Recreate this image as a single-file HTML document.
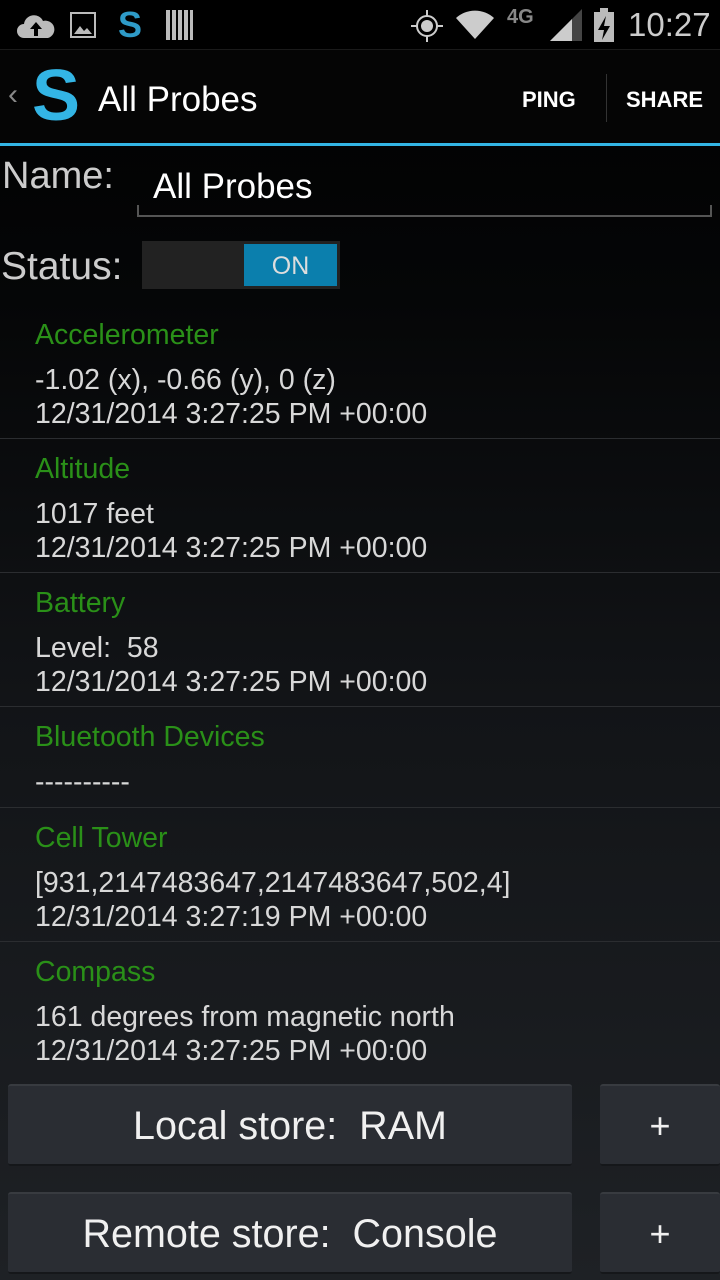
<!DOCTYPE html>
<html><head><meta charset="utf-8"><style>
*{margin:0;padding:0;box-sizing:border-box}
body{width:720px;height:1280px;overflow:hidden;font-family:"Liberation Sans",sans-serif;background:linear-gradient(#000 0px,#050607 300px,#121417 700px,#1e2125 1280px);color:#ddd;position:relative}
.abs{position:absolute}
.sb{top:0;left:0;width:720px;height:50px;background:#000;border-bottom:1px solid #1a1a1a}
.ab{top:50px;left:0;width:720px;height:93px;background:#050505}
.line{top:143px;left:0;width:720px;height:3px;background:#33b5e5}
.item{position:absolute;left:0;width:720px;border-bottom:1px solid #2b2d30}
.t{position:absolute;left:35px;color:#2a9018;font-size:28.5px;line-height:32px}
.v{position:absolute;left:35px;color:#d8d8d8;font-size:28.5px;line-height:32px}
.btn{position:absolute;background:#2a2d33;border-top:2px solid #383b40;border-bottom:2px solid #15171a;border-radius:3px;color:#f0f0f0;text-align:center}
</style></head><body>
<div class="abs sb">
<svg class="abs" style="left:16px;top:12px" width="40" height="28" viewBox="0 0 40 28"><path d="M8 26a7 7 0 0 1 0-14a10 10 0 0 1 19-3a8 8 0 0 1 5 17z" fill="#bbb"/><path d="M20 10l-6 7h4v7h4v-7h4z" fill="#000"/></svg>
<svg class="abs" style="left:70px;top:12px" width="26" height="26"><rect x="1" y="1" width="24" height="24" fill="none" stroke="#bbb" stroke-width="2"/><path d="M4 22l6-8 4 5 3-3 5 6z" fill="#bbb"/></svg>
<div class="abs" style="left:118px;top:4px;font-size:36px;font-weight:bold;color:#2e9bc8">S</div>
<svg class="abs" style="left:166px;top:10px" width="28" height="30"><g fill="#bbb"><rect x="0" y="0" width="4" height="30"/><rect x="6" y="0" width="4" height="30"/><rect x="12" y="0" width="4" height="30"/><rect x="18" y="0" width="4" height="30"/><rect x="24" y="0" width="3" height="30"/></g></svg>
<svg class="abs" style="left:410px;top:9px" width="34" height="34"><circle cx="17" cy="17" r="10" fill="none" stroke="#ccc" stroke-width="2"/><circle cx="17" cy="17" r="6" fill="#ccc"/><path d="M17 1v6M17 27v6M1 17h6M27 17h6" stroke="#ccc" stroke-width="2"/></svg>
<svg class="abs" style="left:455px;top:10px" width="40" height="30" viewBox="0 0 40 30"><path d="M20 29L1 8a28 28 0 0 1 38 0z" fill="#ccc"/></svg>
<div class="abs" style="left:507px;top:6px;font-size:20px;font-weight:bold;color:#888">4G</div>
<svg class="abs" style="left:548px;top:8px" width="36" height="34"><path d="M2 33L34 1V33z" fill="#444"/><path d="M2 33L24 11V33z" fill="#ccc"/></svg>
<svg class="abs" style="left:592px;top:8px" width="24" height="34"><rect x="8" y="0" width="8" height="4" fill="#bbb"/><rect x="2" y="4" width="20" height="30" fill="#bbb"/><path d="M14 8l-8 14h6l-2 10 8-14h-6z" fill="#000"/></svg>
<div class="abs" style="left:628px;top:6px;font-size:33px;color:#ccc">10:27</div>
</div>
<div class="abs ab">
<div class="abs" style="left:8px;top:28px;font-size:30px;color:#888">‹</div>
<div class="abs" style="left:32px;top:6px;font-size:72px;font-weight:bold;color:#33b5e5;line-height:80px">S</div>
<div class="abs" style="left:98px;top:30px;font-size:35px;color:#fff">All Probes</div>
<div class="abs" style="left:522px;top:37px;font-size:22px;font-weight:bold;color:#fff">PING</div>
<div class="abs" style="left:606px;top:24px;width:1px;height:48px;background:#333"></div>
<div class="abs" style="left:626px;top:37px;font-size:22px;font-weight:bold;color:#fff">SHARE</div>
</div>
<div class="abs line"></div>
<div class="abs" style="left:2px;top:155px;font-size:38px;color:#ccc">Name:</div>
<div class="abs" style="left:153px;top:167px;font-size:35px;color:#fff">All Probes</div>
<div class="abs" style="left:137px;top:205px;width:575px;height:12px;border:2px solid #555;border-top:none"></div>
<div class="abs" style="left:1px;top:245px;font-size:39px;color:#ccc">Status:</div>
<div class="abs" style="left:142px;top:241px;width:198px;height:48px;background:#222"></div>
<div class="abs" style="left:244px;top:244px;width:93px;height:42px;background:#0b7fad;color:#ddd;font-size:25px;text-align:center;line-height:44px">ON</div>

<div class="item" style="top:305px;height:134px"><div class="t" style="top:14px">Accelerometer</div><div class="v" style="top:59px">-1.02 (x), -0.66 (y), 0 (z)</div><div class="v" style="top:93px">12/31/2014 3:27:25 PM +00:00</div></div>
<div class="item" style="top:439px;height:134px"><div class="t" style="top:14px">Altitude</div><div class="v" style="top:59px">1017 feet</div><div class="v" style="top:93px">12/31/2014 3:27:25 PM +00:00</div></div>
<div class="item" style="top:573px;height:134px"><div class="t" style="top:14px">Battery</div><div class="v" style="top:59px">Level:&nbsp; 58</div><div class="v" style="top:93px">12/31/2014 3:27:25 PM +00:00</div></div>
<div class="item" style="top:707px;height:101px"><div class="t" style="top:14px">Bluetooth Devices</div><div class="v" style="top:59px">----------</div></div>
<div class="item" style="top:808px;height:134px"><div class="t" style="top:14px">Cell Tower</div><div class="v" style="top:59px">[931,2147483647,2147483647,502,4]</div><div class="v" style="top:93px">12/31/2014 3:27:19 PM +00:00</div></div>
<div class="item" style="top:942px;height:134px;border:none"><div class="t" style="top:14px">Compass</div><div class="v" style="top:59px">161 degrees from magnetic north</div><div class="v" style="top:93px">12/31/2014 3:27:25 PM +00:00</div></div>

<div class="btn" style="left:8px;top:1084px;width:564px;height:82px;font-size:39.5px;line-height:80px">Local store:&nbsp; RAM</div>
<div class="btn" style="left:600px;top:1084px;width:120px;height:82px;font-size:36px;line-height:80px">+</div>
<div class="btn" style="left:8px;top:1192px;width:564px;height:82px;font-size:39.5px;line-height:80px">Remote store:&nbsp; Console</div>
<div class="btn" style="left:600px;top:1192px;width:120px;height:82px;font-size:36px;line-height:80px">+</div>
</body></html>
